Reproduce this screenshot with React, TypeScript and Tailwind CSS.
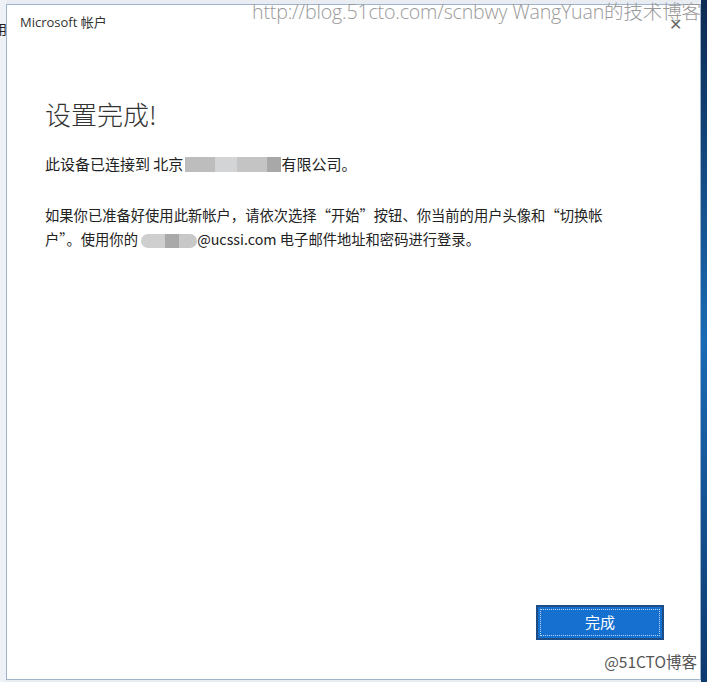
import React from 'react';

const FONT = { fontFamily: '"Noto Sans CJK SC", "Noto Sans", sans-serif' };

export default function App() {
  return (
    <div className="relative w-[707px] h-[682px] overflow-hidden bg-[#e9edf2]" style={FONT}>
      <div className="flex h-full">
        {/* left strip of the window behind */}
        <div className="w-[6px] bg-[#eef1f5] flex flex-col text-[13px] leading-none text-[#222] overflow-hidden">
          <span className="mt-[22px] -ml-[6px]">用</span>
        </div>

        {/* dialog */}
        <div className="flex-1 mt-[4px] mb-[2px] border border-[#9db4cc] bg-white flex flex-col relative">
          <div className="flex items-center justify-between pl-[13px] pr-[18px] pt-[8px] h-[28px]">
            <span className="text-[13px] text-[#333]" style={{ fontFamily: '"Open Sans", "Noto Sans CJK SC", sans-serif' }}>
              Microsoft 帐户
            </span>
            <span className="text-[16px] text-[#666] font-light">✕</span>
          </div>

          <div className="pl-[38px] pr-6 pt-[68px] flex flex-col">
            <h1 className="text-[26px] font-light text-[#333] leading-none">设置完成!</h1>

            <p className="mt-[25px] text-[15px] text-[#222] leading-[24px] flex items-center">
              此设备已连接到 北京
              <span className="inline-flex h-[15px] w-[96px] ml-[2px]">
                <span className="w-[30px] bg-[#bdbdbd]" />
                <span className="w-[22px] bg-[#d2d4d6]" />
                <span className="w-[30px] bg-[#c4c4c4]" />
                <span className="w-[14px] bg-[#a8a8a8]" />
              </span>
              有限公司。
            </p>

            <p className="mt-[27px] text-[14.3px] text-[#222] leading-[24px]">
              如果你已准备好使用此新帐户，请依次选择“开始”按钮、你当前的用户头像和“切换帐
              <br />
              户”。使用你的{' '}
              <span className="inline-flex h-[14px] w-[56px] align-middle rounded-full overflow-hidden">
                <span className="w-[24px] bg-[#cfcfcf]" />
                <span className="w-[14px] bg-[#a9a9a9]" />
                <span className="w-[18px] bg-[#c8c8c8]" />
              </span>
              @ucssi.com 电子邮件地址和密码进行登录。
            </p>
          </div>

          <div className="mt-auto flex justify-end pr-[36px] pb-[39px]">
            <button className="w-[128px] h-[35px] bg-[#1570d0] border-2 border-[#1c4d86] p-[2px]">
              <span className="flex h-full items-center justify-center border border-dotted border-[#bcd6f2] text-[15px] text-white">
                完成
              </span>
            </button>
          </div>
        </div>

        {/* desktop strip */}
        <div className="w-[6px] bg-gradient-to-b from-[#0d2c52] via-[#1b6bb5] to-[#0e3a6e]" />
      </div>

      {/* watermarks */}
      <div
        className="absolute top-[0px] right-[6px] text-[19.6px] leading-[24px] text-[#9a9a9a] font-light tracking-[-0.2px]"
        style={{ fontFamily: '"Open Sans", "Noto Sans CJK SC", sans-serif' }}
      >
        http://blog.51cto.com/scnbwy WangYuan的技术博客
      </div>
      <div className="absolute bottom-[13px] right-[10px] text-[15.5px] leading-none text-[#555]">@51CTO博客</div>
    </div>
  );
}
